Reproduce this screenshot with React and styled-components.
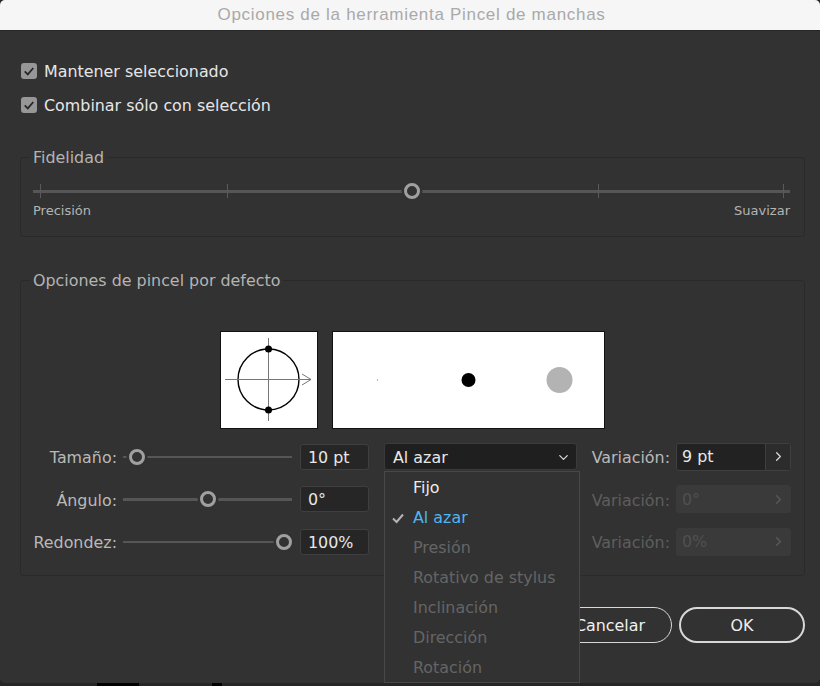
import React from "react";
import styled, { createGlobalStyle } from "styled-components";
import { ChevronDown, ChevronRight } from "lucide-react";

const GlobalStyle = createGlobalStyle`
  * {
    box-sizing: border-box;
  }
  html, body {
    margin: 0;
    padding: 0;
    background: #262626;
  }
  body {
    font-family: "DejaVu Sans", "Liberation Sans", sans-serif;
    font-size: 15.9px;
  }
`;

const Window = styled.div`
  width: 820px;
  height: 683px;
  background: #323232;
  border-radius: 5px 5px 5px 5px;
  overflow: hidden;
  display: flex;
  flex-direction: column;
`;

const TitleBar = styled.div`
  height: 31px;
  flex: none;
  background: #f6f6f6;
  border-bottom: 1px solid #262626;
  color: #a9a9a9;
  font-family: "Liberation Sans", sans-serif;
  font-size: 17px;
  line-height: 30px;
  letter-spacing: 0.7px;
  text-align: center;
  padding-left: 3px;
`;

const Body = styled.div`
  flex: 1;
  padding: 28px 15px 0 20px;
  display: flex;
  flex-direction: column;
`;

const CheckRow = styled.label`
  display: flex;
  align-items: center;
  gap: 7px;
  height: 24px;
  margin-bottom: 10px;
  color: #e6e6e6;
  padding-left: 1px;
`;

const CheckBox = styled.span`
  width: 16px;
  height: 16px;
  border-radius: 3px;
  background: #979797;
  display: flex;
  align-items: center;
  justify-content: center;
`;

const Group = styled.fieldset`
  margin: ${(props) => props.$top}px 0 0;
  padding: 0;
  height: ${(props) => props.$height}px;
  border: 1px solid #2a2a2a;
  border-radius: 3px;
  min-width: 0;
  position: relative;
`;

const GroupTitle = styled.legend`
  margin-left: 9px;
  padding: 2px 3px 0;
  line-height: 20px;
  color: #b4b4b4;
`;

const FidelityBody = styled.div`
  padding: 15px 14px 0 12px;
`;

const Track = styled.div`
  position: relative;
  height: 16px;
  &::before {
    content: "";
    position: absolute;
    left: 0;
    right: 0;
    top: 7px;
    height: 2.5px;
    background: #565656;
  }
`;

const Tick = styled.span`
  position: absolute;
  left: ${(props) => props.$at}px;
  top: 1px;
  width: 1px;
  height: 14px;
  background: #5a5a5a;
`;

const Thumb = styled.span`
  position: absolute;
  left: ${(props) => props.$at};
  top: 0;
  width: 16px;
  height: 16px;
  margin-left: -8px;
  border-radius: 50%;
  border: 3px solid #a0a0a0;
  background: #323232;
  box-shadow: 0 0 0 2.5px #323232;
`;

const ScaleLabels = styled.div`
  display: flex;
  justify-content: space-between;
  margin-top: 2px;
  font-size: 13px;
  line-height: 20px;
  color: #b4b4b4;
`;

const Previews = styled.div`
  display: flex;
  justify-content: center;
  gap: 14px;
  padding-top: 40px;
`;

const PreviewBox = styled.div`
  height: 98px;
  width: ${(props) => props.$width}px;
  background: #fff;
  border: 1px solid #111;
`;

const Rows = styled.div`
  display: grid;
  grid-template-columns: 96px 175px 77px 208px 93px 121px;
  grid-auto-rows: 26px;
  row-gap: 16.5px;
  align-items: center;
  padding-top: 14.5px;
`;

const RowLabel = styled.span`
  grid-column: ${(props) => props.$col};
  text-align: right;
  color: ${(props) => (props.$off ? "#5e5e5e" : "#b9b9b9")};
  white-space: nowrap;
  padding-top: 2px;
`;

const SliderCell = styled.div`
  margin-left: 6px;
  width: 169px;
`;

const Field = styled.div`
  height: 26px;
  margin-left: 8px;
  width: 69px;
  background: #262626;
  border: 1px solid #3f3f3f;
  border-radius: 3px;
  padding-left: 7px;
  line-height: 25px;
  color: #e8e8e8;
`;

const SelectWrap = styled.div`
  position: relative;
  grid-column: 4;
  margin-left: 15px;
  width: 193px;
  height: 27px;
`;

const Select = styled.div`
  height: 27px;
  background: #1f1f1f;
  border: 1px solid #3a3a3a;
  border-radius: 3px;
  padding: 1px 5px 0 8px;
  display: flex;
  align-items: center;
  justify-content: space-between;
  color: #e8e8e8;
`;

const Menu = styled.ul`
  position: absolute;
  z-index: 2;
  top: 28px;
  left: 0;
  width: 196px;
  height: 212px;
  margin: 0;
  padding: 1px 0 0;
  list-style: none;
  background: #323232;
  border: 1px solid #484848;
  display: flex;
  flex-direction: column;
  justify-content: center;
`;

const MenuItem = styled.li`
  position: relative;
  height: 30.2px;
  line-height: 30px;
  padding-left: 28px;
  color: ${(props) => props.$color};
  svg {
    position: absolute;
    left: 6px;
    top: 8px;
  }
`;

const VariationField = styled.div`
  height: 28px;
  margin-left: 6px;
  width: 115px;
  background: ${(props) => (props.$off ? "#3a3a3a" : "#222")};
  border: 1px solid ${(props) => (props.$off ? "#3a3a3a" : "#3f3f3f")};
  border-radius: 3px;
  display: flex;
  align-items: center;
  justify-content: space-between;
  padding-left: 5px;
  color: ${(props) => (props.$off ? "#505050" : "#e8e8e8")};
`;

const Stepper = styled.span`
  width: 25px;
  height: 100%;
  display: flex;
  align-items: center;
  justify-content: center;
  background: ${(props) => (props.$off ? "transparent" : "#2c2c2c")};
  border-left: 1px solid ${(props) => (props.$off ? "transparent" : "#3f3f3f")};
  color: ${(props) => (props.$off ? "#5a5a5a" : "#d8d8d8")};
`;

const Footer = styled.div`
  display: flex;
  justify-content: flex-end;
  gap: 7px;
  margin-top: 31px;
`;

const Button = styled.button`
  width: ${(props) => (props.$primary ? 126 : 124)}px;
  height: 36px;
  border-radius: 18px;
  background: transparent;
  border: ${(props) => (props.$primary ? "2px solid #d8d8d8" : "1px solid #d8d8d8")};
  color: #f0f0f0;
  font-family: inherit;
  font-size: 15.9px;
  padding: 0;
`;

const BottomEdge = styled.div`
  height: 3px;
  display: flex;
`;

const EdgeBlot = styled.span`
  width: ${(props) => props.$width}px;
  margin-left: ${(props) => props.$left}px;
  background: #000;
`;

const TICKS = [7, 194, 379, 565, 750];

const rows = [
  { label: "Tamaño:", thumb: "8.3%", value: "10 pt", variation: "9 pt" },
  { label: "Ángulo:", thumb: "50%", value: "0°", variation: "0°", off: true },
  { label: "Redondez:", thumb: "95.5%", value: "100%", variation: "0%", off: true },
];

const menuItems = [
  { label: "Fijo", color: "#ececec" },
  { label: "Al azar", color: "#4db5f5", checked: true },
  { label: "Presión", color: "#656565" },
  { label: "Rotativo de stylus", color: "#656565" },
  { label: "Inclinación", color: "#656565" },
  { label: "Dirección", color: "#656565" },
  { label: "Rotación", color: "#656565" },
];

const TickMark = ({ color, size }) => (
  <svg width={size} height={size} viewBox="0 0 14 14" fill="none">
    <path d="M2 7.5 L5.6 11 L12 3.5" stroke={color} strokeWidth="2" />
  </svg>
);

const BrushShape = () => (
  <svg width="96" height="96" viewBox="0 0 96 96" fill="none">
    <circle cx="47.5" cy="47.5" r="30.5" stroke="#000" strokeWidth="1.4" />
    <path d="M47.5 6 V89 M4 47.5 H90" stroke="#777" strokeWidth="1" />
    <path d="M81 42 L90 47.5 L81 53" stroke="#777" strokeWidth="1" />
    <circle cx="47.5" cy="17" r="3.5" fill="#000" />
    <circle cx="47.5" cy="78" r="3.5" fill="#000" />
  </svg>
);

const BrushPreview = () => (
  <svg width="271" height="96" viewBox="0 0 271 96">
    <circle cx="44.5" cy="48" r="0.7" fill="#999" />
    <circle cx="135.5" cy="48" r="7" fill="#000" />
    <circle cx="226.5" cy="48" r="13" fill="#b3b3b3" />
  </svg>
);

const App = () => (
  <>
    <GlobalStyle />
    <Window>
      <TitleBar>Opciones de la herramienta Pincel de manchas</TitleBar>
      <Body>
        <CheckRow>
          <CheckBox>
            <TickMark color="#262626" size={12} />
          </CheckBox>
          Mantener seleccionado
        </CheckRow>
        <CheckRow>
          <CheckBox>
            <TickMark color="#262626" size={12} />
          </CheckBox>
          Combinar sólo con selección
        </CheckRow>
        <Group $top={19} $height={91}>
          <GroupTitle>Fidelidad</GroupTitle>
          <FidelityBody>
            <Track>
              {TICKS.map((at) => (
                <Tick key={at} $at={at} />
              ))}
              <Thumb $at="50%" />
            </Track>
            <ScaleLabels>
              <span>Precisión</span>
              <span>Suavizar</span>
            </ScaleLabels>
          </FidelityBody>
        </Group>
        <Group $top={32} $height={307}>
          <GroupTitle>Opciones de pincel por defecto</GroupTitle>
          <Previews>
            <PreviewBox $width={98}>
              <BrushShape />
            </PreviewBox>
            <PreviewBox $width={273}>
              <BrushPreview />
            </PreviewBox>
          </Previews>
          <Rows>
            {rows.map((row, i) => (
              <React.Fragment key={row.label}>
                <RowLabel $col={1}>{row.label}</RowLabel>
                <SliderCell>
                  <Track>
                    <Thumb $at={row.thumb} />
                  </Track>
                </SliderCell>
                <Field>{row.value}</Field>
                {i === 0 ? (
                  <SelectWrap>
                    <Select>
                      Al azar
                      <ChevronDown size={15} color="#d8d8d8" />
                    </Select>
                    <Menu>
                      {menuItems.map((item) => (
                        <MenuItem key={item.label} $color={item.color}>
                          {item.checked && <TickMark color="#b4b4b4" size={14} />}
                          {item.label}
                        </MenuItem>
                      ))}
                    </Menu>
                  </SelectWrap>
                ) : null}
                <RowLabel $col={5} $off={row.off}>
                  Variación:
                </RowLabel>
                <VariationField $off={row.off}>
                  {row.variation}
                  <Stepper $off={row.off}>
                    <ChevronRight size={15} />
                  </Stepper>
                </VariationField>
              </React.Fragment>
            ))}
          </Rows>
        </Group>
        <Footer>
          <Button>Cancelar</Button>
          <Button $primary>OK</Button>
        </Footer>
      </Body>
    </Window>
    <BottomEdge>
      <EdgeBlot $left={97} $width={42} />
      <EdgeBlot $left={73} $width={10} />
    </BottomEdge>
  </>
);

export default App;
